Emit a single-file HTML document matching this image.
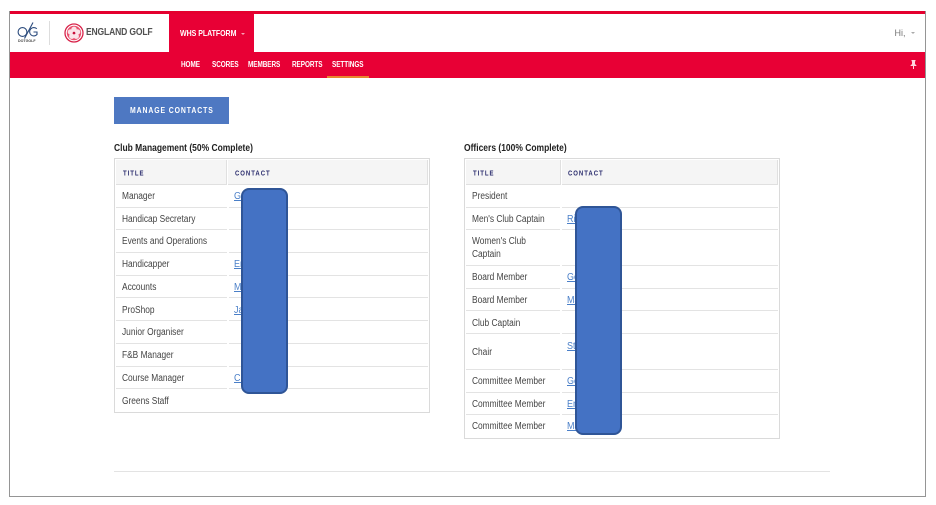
<!DOCTYPE html>
<html><head><meta charset="utf-8"><style>
html,body{margin:0;padding:0;background:#fff}
body{width:936px;height:505px;overflow:hidden;position:relative;font-family:"Liberation Sans",sans-serif}
div,a,span{position:absolute;white-space:nowrap}
.b{background:#e3e3e3}
.t{font-size:10px;color:#444;line-height:12px;transform:translateY(1px) scaleX(.836);transform-origin:0 50%}
.a{font-size:10px;color:#4a7fc8;line-height:12px;text-decoration:underline;transform:translateY(1px) scaleX(.9);transform-origin:0 50%}
.h{font-size:7.4px;font-weight:bold;color:#2b2d6e;letter-spacing:1.2px;line-height:10px;transform:translateY(.5px) scaleX(.81);transform-origin:0 50%}
.n{font-size:8.6px;font-weight:bold;color:#fff;top:59px;line-height:11px;letter-spacing:-.1px;transform:scaleX(.745);transform-origin:0 50%}
.s{font-size:9.8px;font-weight:bold;color:#222;top:142.5px;line-height:12px;transform:translateY(0) scaleX(.865);transform-origin:0 50%}
.bk{background:#4472c4;border:2px solid #2f5597;border-radius:8px;box-sizing:border-box}
.g{background:#fff;width:2px}
</style></head><body>
<!-- frame -->
<div style="left:9px;top:11px;width:917px;height:486px;box-sizing:border-box;border:1px solid #959595;border-top:0"></div>
<div style="left:10px;top:11px;width:915px;height:3px;background:#e4002f"></div>
<div style="left:10px;top:52px;width:915px;height:25.5px;background:#e80035"></div>
<div style="left:169px;top:14px;width:85px;height:38px;background:#e80035"></div>
<!-- logos -->
<svg style="position:absolute;left:15px;top:18px" width="30" height="28" viewBox="0 0 30 28">
<circle cx="7.5" cy="14" r="4.4" fill="none" stroke="#2a4a7c" stroke-width="1.1"/>
<path d="M9.5 20.5L18 4.5" stroke="#2a4a7c" stroke-width="1.1" fill="none"/>
<path d="M21.8 10.8A4.2 4.2 0 1 0 22 16.5V14H18.5" fill="none" stroke="#2a4a7c" stroke-width="1.1"/>
<text x="3" y="24" font-family="Liberation Sans" font-size="3.6" font-weight="bold" fill="#444">DOTGOLF</text>
</svg>
<div style="left:49px;top:21px;width:1px;height:24px;background:#ddd"></div>
<svg style="position:absolute;left:63.5px;top:22.5px" width="20" height="20" viewBox="0 0 20 20">
<circle cx="10" cy="10" r="9" fill="#fff" stroke="#d8234a" stroke-width="1.3"/>
<circle cx="10" cy="10" r="7.2" fill="#e8506e"/>
<circle cx="10" cy="6.3" r="2.7" fill="#fbe3e8"/><circle cx="13.6" cy="8.9" r="2.7" fill="#fbe3e8"/><circle cx="12.2" cy="13.2" r="2.7" fill="#fbe3e8"/><circle cx="7.8" cy="13.2" r="2.7" fill="#fbe3e8"/><circle cx="6.4" cy="8.9" r="2.7" fill="#fbe3e8"/>
<circle cx="10" cy="10" r="1.3" fill="#c8103c"/>
</svg>
<div style="left:86px;top:26.5px;font-size:10.2px;line-height:12px;color:#333;font-weight:bold;letter-spacing:-.2px;opacity:.85;transform:scaleX(.84);transform-origin:0 50%">ENGLAND GOLF</div>
<!-- nav -->
<div style="left:179.5px;top:28px;font-size:8.4px;line-height:11px;font-weight:bold;color:#fff;letter-spacing:-.05px;transform:scaleX(.84);transform-origin:0 50%">WHS PLATFORM</div>
<div style="left:240.5px;top:32.5px;border:2px solid transparent;border-top:2px solid #f7a0b4"></div>
<div class="n" style="left:181px">HOME</div>
<div class="n" style="left:212px">SCORES</div>
<div class="n" style="left:248px">MEMBERS</div>
<div class="n" style="left:292px">REPORTS</div>
<div class="n" style="left:332px">SETTINGS</div>
<div style="left:327px;top:75.5px;width:42px;height:2px;background:#e8862e"></div>
<div style="left:894.5px;top:27px;font-size:9px;line-height:12px;color:#777">Hi,</div>
<div style="left:911px;top:31.5px;border:2.2px solid transparent;border-top:2.2px solid #aaa"></div>
<svg style="position:absolute;left:910px;top:60px" width="7" height="9" viewBox="0 0 7 9"><path d="M1.5 0H5.5V1L5 1.5V4L6.5 5.5V6H4V9H3V6H.5V5.5L2 4V1.5L1.5 1Z" fill="#ffd5de"/></svg>
<!-- button -->
<div style="left:114px;top:97px;width:115px;height:27px;background:#4e78c2"></div>
<div style="left:130px;top:105.5px;font-size:8px;line-height:10px;font-weight:bold;color:#fff;letter-spacing:1.05px;transform:scaleX(.86);transform-origin:0 50%">MANAGE CONTACTS</div>

<!-- table 1 -->
<div class="s" style="left:114px">Club Management (50% Complete)</div>
<div style="left:114px;top:158px;width:316px;height:255px;box-sizing:border-box;border:1px solid #dadada"></div>
<div style="left:116px;top:160px;width:110px;height:24px;background:#f5f5f5;border-bottom:1px solid #e0e0e0;border-right:1px solid #e0e0e0"></div>
<div style="left:228px;top:160px;width:199px;height:24px;background:#f5f5f5;border-bottom:1px solid #e0e0e0;border-right:1px solid #e0e0e0"></div>
<div class="h" style="left:122.5px;top:167.5px">TITLE</div>
<div class="h" style="left:235px;top:167.5px">CONTACT</div>
<div class="b" style="left:116px;top:206.5px;width:312px;height:1px"></div>
<div class="b" style="left:116px;top:229px;width:312px;height:1px"></div>
<div class="b" style="left:116px;top:252px;width:312px;height:1px"></div>
<div class="b" style="left:116px;top:274.5px;width:312px;height:1px"></div>
<div class="b" style="left:116px;top:297px;width:312px;height:1px"></div>
<div class="b" style="left:116px;top:320px;width:312px;height:1px"></div>
<div class="b" style="left:116px;top:343px;width:312px;height:1px"></div>
<div class="b" style="left:116px;top:365.5px;width:312px;height:1px"></div>
<div class="b" style="left:116px;top:388px;width:312px;height:1px"></div>
<div class="g" style="left:226.5px;top:185px;height:226px"></div>
<div class="t" style="left:121.5px;top:190px">Manager</div>
<div class="t" style="left:121.5px;top:212.5px">Handicap Secretary</div>
<div class="t" style="left:121.5px;top:235px">Events and Operations</div>
<div class="t" style="left:121.5px;top:258px">Handicapper</div>
<div class="t" style="left:121.5px;top:281px">Accounts</div>
<div class="t" style="left:121.5px;top:303.5px">ProShop</div>
<div class="t" style="left:121.5px;top:326px">Junior Organiser</div>
<div class="t" style="left:121.5px;top:349px">F&amp;B Manager</div>
<div class="t" style="left:121.5px;top:372px">Course Manager</div>
<div class="t" style="left:121.5px;top:394.5px">Greens Staff</div>
<a class="a" style="left:233.5px;top:190px">Ge</a>
<a class="a" style="left:233.5px;top:258px">Em</a>
<a class="a" style="left:233.5px;top:281px">Ma</a>
<a class="a" style="left:233.5px;top:303.5px">Jan</a>
<a class="a" style="left:233.5px;top:372px">Ch</a>
<div class="bk" style="left:240.5px;top:188px;width:47px;height:206px"></div>

<!-- table 2 -->
<div class="s" style="left:464px">Officers (100% Complete)</div>
<div style="left:464px;top:158px;width:316px;height:281px;box-sizing:border-box;border:1px solid #dadada"></div>
<div style="left:466px;top:160px;width:94px;height:24px;background:#f5f5f5;border-bottom:1px solid #e0e0e0;border-right:1px solid #e0e0e0"></div>
<div style="left:561.5px;top:160px;width:215.5px;height:24px;background:#f5f5f5;border-bottom:1px solid #e0e0e0;border-right:1px solid #e0e0e0"></div>
<div class="h" style="left:473px;top:167.5px">TITLE</div>
<div class="h" style="left:568px;top:167.5px">CONTACT</div>
<div class="b" style="left:466px;top:206.5px;width:312px;height:1px"></div>
<div class="b" style="left:466px;top:229px;width:312px;height:1px"></div>
<div class="b" style="left:466px;top:265px;width:312px;height:1px"></div>
<div class="b" style="left:466px;top:287.5px;width:312px;height:1px"></div>
<div class="b" style="left:466px;top:310px;width:312px;height:1px"></div>
<div class="b" style="left:466px;top:333px;width:312px;height:1px"></div>
<div class="b" style="left:466px;top:369px;width:312px;height:1px"></div>
<div class="b" style="left:466px;top:391.5px;width:312px;height:1px"></div>
<div class="b" style="left:466px;top:414px;width:312px;height:1px"></div>
<div class="g" style="left:560px;top:185px;height:252px"></div>
<div class="t" style="left:471.5px;top:190px">President</div>
<div class="t" style="left:471.5px;top:212.5px">Men's Club Captain</div>
<div class="t" style="left:471.5px;top:235px">Women's Club</div>
<div class="t" style="left:471.5px;top:248px">Captain</div>
<div class="t" style="left:471.5px;top:271px">Board Member</div>
<div class="t" style="left:471.5px;top:293.5px">Board Member</div>
<div class="t" style="left:471.5px;top:316.5px">Club Captain</div>
<div class="t" style="left:471.5px;top:345.5px">Chair</div>
<div class="t" style="left:471.5px;top:375px">Committee Member</div>
<div class="t" style="left:471.5px;top:397.5px">Committee Member</div>
<div class="t" style="left:471.5px;top:420px">Committee Member</div>
<a class="a" style="left:567px;top:212.5px">Ri</a>
<a class="a" style="left:567px;top:271px">Ge</a>
<a class="a" style="left:567px;top:293.5px">Ma</a>
<a class="a" style="left:567px;top:339.5px">Ste</a>
<a class="a" style="left:567px;top:375px">Ge</a>
<a class="a" style="left:567px;top:397.5px">Em</a>
<a class="a" style="left:567px;top:420px">Ma</a>
<div class="bk" style="left:574.5px;top:206px;width:47.5px;height:229px"></div>
<div style="left:114px;top:471px;width:716px;height:1px;background:#e3e3e3"></div>
</body></html>
